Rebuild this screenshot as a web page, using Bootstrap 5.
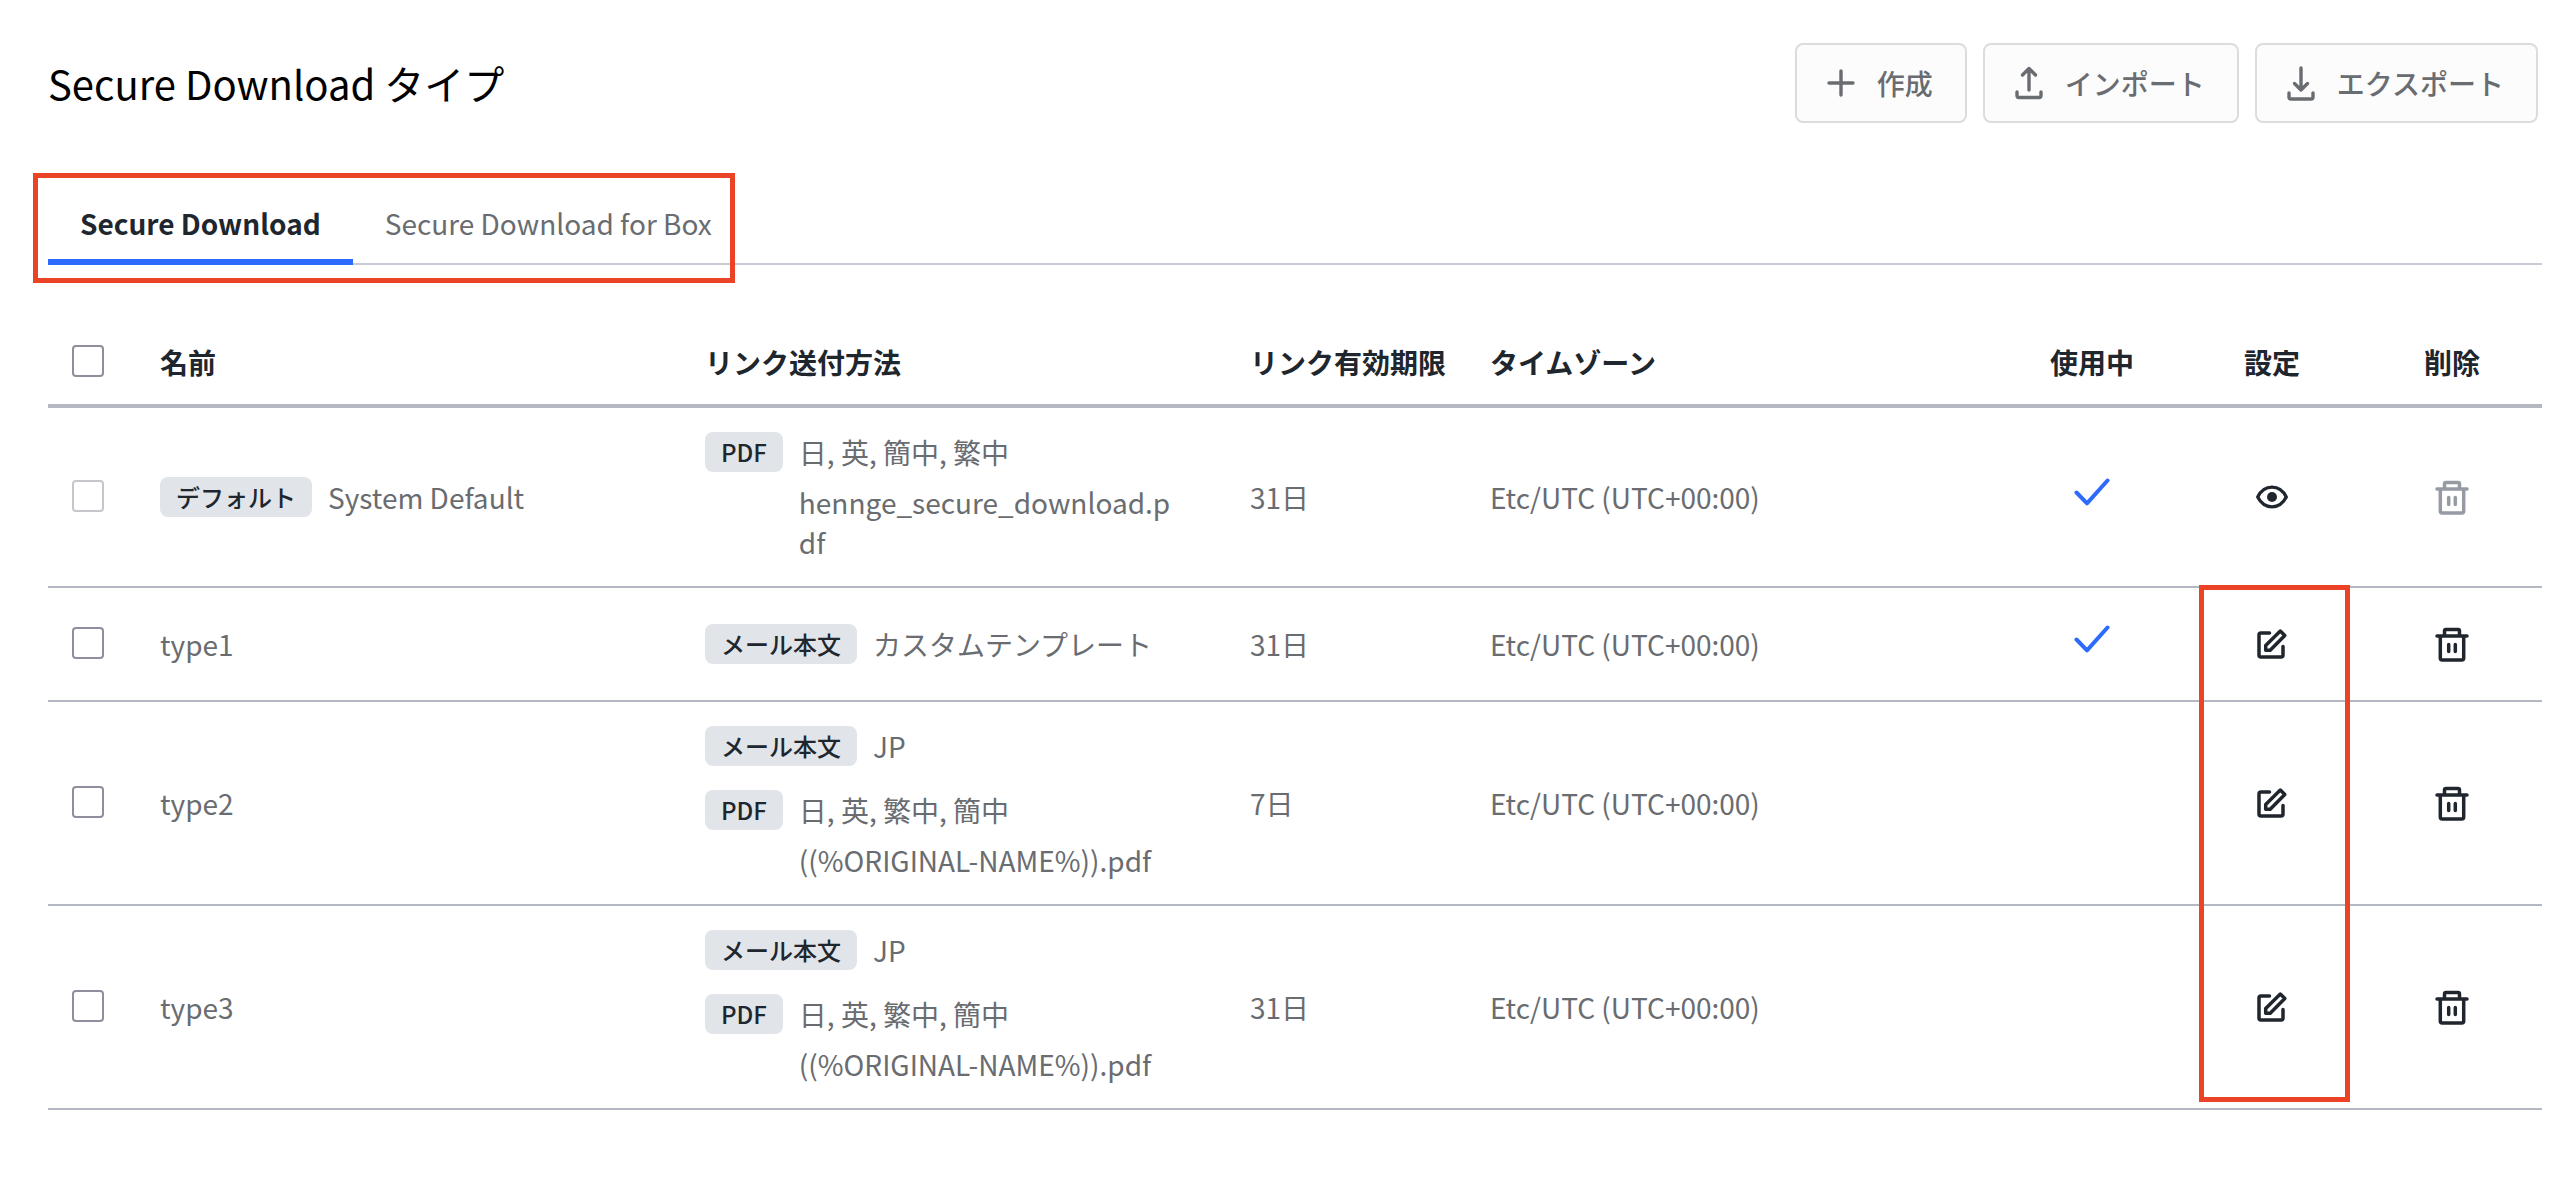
<!DOCTYPE html>
<html lang="ja">
<head>
<meta charset="utf-8">
<meta name="viewport" content="width=device-width, initial-scale=1">
<title>Secure Download タイプ</title>
<link href="https://cdn.jsdelivr.net/npm/bootstrap@5.3.0/dist/css/bootstrap.min.css" rel="stylesheet">
<style>
  body { font-family: "Noto Sans CJK JP", "Noto Sans", sans-serif; font-size: 28px; line-height: 40px; color: #696c70; background: #fff; }
  .page { padding: 43px 34px 48px 48px; }
  .page-title { font-size: 40px; line-height: 60px; font-weight: 400; color: #000; }
  .page-actions { gap: 16px; margin-right: 4px; }
  .action-btn { display: flex; align-items: center; gap: 24px; height: 80px; padding: 0 32px; border: 2px solid #dcdcdc; border-radius: 8px; background: #fcfcfc; color: #696c70; font-size: 28px; line-height: 40px; font-weight: 500; }
  .action-btn:hover { background: #f3f3f3; color: #555; border-color: #dcdcdc; }
  svg { display: block; fill: none; stroke: currentColor; stroke-linecap: round; stroke-linejoin: round; overflow: visible; }
  .type-tabs { position: relative; margin-top: 64px; box-shadow: inset 0 -2px #c8cdd5; }
  .type-tabs .nav-link { padding: 16px 32px; border-bottom: 6px solid transparent; color: #696c70; }
  .type-tabs .nav-link.active { font-weight: 700; color: #20262d; border-bottom-color: #2d6bff; }
  .callout-frame { position: absolute; border: 5px solid #ec4226; pointer-events: none; }
  .frame-tabs { left: -15px; top: -14px; bottom: -18px; width: 702px; }
  .frame-settings { right: 192px; top: 265px; bottom: 8px; width: 151px; }
  .table-area { position: relative; margin-top: 55px; }
  .type-table { table-layout: fixed; border-collapse: separate; border-spacing: 0; margin: 0; color: inherit; }
  .type-table > :not(caption) > * > * { padding: 24px 16px; border-bottom: 2px solid #b4b8c3; color: inherit; background: none; vertical-align: middle; }
  .type-table > thead > tr > th { padding: 22px 16px; border-bottom-width: 4px; color: #20262d; font-weight: 700; }
  .type-table > :not(caption) > * > .icon-cell { padding: 0; text-align: center; }
  .type-table > :not(caption) > * > .check-cell { padding: 0 0 0 24px; }
  .type-table > tbody > tr { height: 114px; }
  .col-check { width: 96px; }
  .col-wide { width: 21.85%; }
  .col-limit { width: 240px; }
  .col-icon { width: 180px; }
  .row-check.form-check-input { display: block; float: none; width: 32px; height: 32px; margin: 0 0 2px; border: 2px solid #8f8e9c; border-radius: 4px; }
  .tag { flex: none; height: 40px; padding: 0 16px; border-radius: 8px; background: #e1e4e9; color: #20262d; font-size: 24px; line-height: 40px; font-weight: 500; }
  .tag-row { display: flex; gap: 16px; }
  .tag-row + .tag-row { margin-top: 24px; }
  .file-name { margin-top: 10px; word-break: break-all; }
  .method-cell .tag-row { margin-right: 32px; }
  .icon-btn { padding: 16px; border: 0; color: #20262d; line-height: 1; }
  .icon-btn:disabled { border: 0; color: #969ba3; opacity: 1; }
  .in-use { display: inline-block; margin-bottom: 14px; color: #2d6bff; vertical-align: middle; }
</style>
</head>
<body>
<svg width="0" height="0" class="position-absolute" aria-hidden="true">
  <symbol id="i-eye" viewBox="0 0 32 32"><path d="M1.7 16C5 9.500 10 6.200 16 6.200S27 9.500 30.300 16C27 22.500 22 25.800 16 25.800S5 22.500 1.700 16Z" stroke-width="3.300"/><circle cx="16" cy="16" r="5" fill="currentColor" stroke="none"/></symbol>
  <symbol id="i-edit" viewBox="0 0 32 32"><path d="M13.500 5H5Q3 5 3 7V27Q3 29 5 29H25Q27 29 27 27V18.500M9.700 22.300V17.500L24.300 3L28.800 7.500L14.200 22.300Z" stroke-width="3.500"/></symbol>
  <symbol id="i-trash" viewBox="0 0 36 36"><path d="M3 10H33M10.500 10V5Q10.500 3.500 12 3.500H24Q25.500 3.500 25.500 5V10M6.300 11V32Q6.300 34 8.300 34H27.700Q29.700 34 29.700 32V11" stroke-width="3.500"/><path d="M14.700 18.500V25.500M21.300 18.500V25.500" stroke-width="3.500"/></symbol>
  <symbol id="i-check" viewBox="0 0 36 28"><path d="M2.500 14.500L13 25.300L33.500 2.500" stroke-width="4"/></symbol>
</svg>

<main class="container-fluid page">
  <header class="d-flex justify-content-between align-items-center">
    <h1 class="page-title mb-0">Secure Download タイプ</h1>
    <div class="page-actions d-flex">
      <button type="button" class="btn action-btn"><svg width="24" height="24" viewBox="0 0 24 24" stroke-width="3.400" stroke-linecap="butt" aria-hidden="true"><path d="M12 0V24M0 12H24"/></svg>作成</button>
      <button type="button" class="btn action-btn"><svg width="24" height="32" viewBox="0 0 24 32" stroke-width="3.400" aria-hidden="true"><path d="M12 23V1.500M5.500 8L12 1.500L18.500 8M0 25V28.500Q0 30.500 2 30.500H22Q24 30.500 24 28.500V25"/></svg>インポート</button>
      <button type="button" class="btn action-btn"><svg width="24" height="32" viewBox="0 0 24 32" stroke-width="3.400" aria-hidden="true"><path d="M12 1V23M5.500 16.500L12 23L18.500 16.500M0 26V30Q0 32 2 32H22Q24 32 24 30V26"/></svg>エクスポート</button>
    </div>
  </header>

  <nav class="nav type-tabs">
    <a class="nav-link active" aria-current="page" href="#">Secure Download</a>
    <a class="nav-link" href="#">Secure Download for Box</a>
    <span class="callout-frame frame-tabs"></span>
  </nav>

  <div class="table-area">
    <table class="table type-table">
      <colgroup><col class="col-check"><col class="col-wide"><col class="col-wide"><col class="col-limit"><col><col class="col-icon"><col class="col-icon"><col class="col-icon"></colgroup>
      <thead>
        <tr>
          <th class="check-cell"><input class="form-check-input row-check" type="checkbox" aria-label="すべて選択"></th>
          <th>名前</th><th>リンク送付方法</th><th class="text-nowrap">リンク有効期限</th><th>タイムゾーン</th>
          <th class="icon-cell">使用中</th><th class="icon-cell">設定</th><th class="icon-cell">削除</th>
        </tr>
      </thead>
      <tbody>
        <tr>
          <td class="check-cell"><input class="form-check-input row-check" type="checkbox" aria-label="System Default" disabled></td>
          <td><div class="tag-row"><span class="tag">デフォルト</span><span>System Default</span></div></td>
          <td class="method-cell"><div class="tag-row"><span class="tag">PDF</span><div><div>日, 英, 簡中, 繁中</div><div class="file-name">hennge_secure_download.pdf</div></div></div></td>
          <td>31日</td><td>Etc/UTC (UTC+00:00)</td>
          <td class="icon-cell"><svg class="in-use" width="36" height="28" role="img" aria-label="使用中"><use href="#i-check"/></svg></td>
          <td class="icon-cell"><button type="button" class="btn icon-btn" aria-label="表示"><svg width="32" height="32"><use href="#i-eye"/></svg></button></td>
          <td class="icon-cell"><button type="button" class="btn icon-btn" aria-label="削除" disabled><svg width="36" height="36"><use href="#i-trash"/></svg></button></td>
        </tr>
        <tr>
          <td class="check-cell"><input class="form-check-input row-check" type="checkbox" aria-label="type1"></td>
          <td>type1</td>
          <td class="method-cell"><div class="tag-row"><span class="tag">メール本文</span><span>カスタムテンプレート</span></div></td>
          <td>31日</td><td>Etc/UTC (UTC+00:00)</td>
          <td class="icon-cell"><svg class="in-use" width="36" height="28" role="img" aria-label="使用中"><use href="#i-check"/></svg></td>
          <td class="icon-cell"><button type="button" class="btn icon-btn" aria-label="編集"><svg width="32" height="32"><use href="#i-edit"/></svg></button></td>
          <td class="icon-cell"><button type="button" class="btn icon-btn" aria-label="削除"><svg width="36" height="36"><use href="#i-trash"/></svg></button></td>
        </tr>
        <tr>
          <td class="check-cell"><input class="form-check-input row-check" type="checkbox" aria-label="type2"></td>
          <td>type2</td>
          <td class="method-cell"><div class="tag-row"><span class="tag">メール本文</span><span>JP</span></div><div class="tag-row"><span class="tag">PDF</span><div><div>日, 英, 繁中, 簡中</div><div class="file-name">((%ORIGINAL-NAME%)).pdf</div></div></div></td>
          <td>7日</td><td>Etc/UTC (UTC+00:00)</td>
          <td class="icon-cell"></td>
          <td class="icon-cell"><button type="button" class="btn icon-btn" aria-label="編集"><svg width="32" height="32"><use href="#i-edit"/></svg></button></td>
          <td class="icon-cell"><button type="button" class="btn icon-btn" aria-label="削除"><svg width="36" height="36"><use href="#i-trash"/></svg></button></td>
        </tr>
        <tr>
          <td class="check-cell"><input class="form-check-input row-check" type="checkbox" aria-label="type3"></td>
          <td>type3</td>
          <td class="method-cell"><div class="tag-row"><span class="tag">メール本文</span><span>JP</span></div><div class="tag-row"><span class="tag">PDF</span><div><div>日, 英, 繁中, 簡中</div><div class="file-name">((%ORIGINAL-NAME%)).pdf</div></div></div></td>
          <td>31日</td><td>Etc/UTC (UTC+00:00)</td>
          <td class="icon-cell"></td>
          <td class="icon-cell"><button type="button" class="btn icon-btn" aria-label="編集"><svg width="32" height="32"><use href="#i-edit"/></svg></button></td>
          <td class="icon-cell"><button type="button" class="btn icon-btn" aria-label="削除"><svg width="36" height="36"><use href="#i-trash"/></svg></button></td>
        </tr>
      </tbody>
    </table>
    <span class="callout-frame frame-settings"></span>
  </div>
</main>
<script src="https://cdn.jsdelivr.net/npm/bootstrap@5.3.0/dist/js/bootstrap.bundle.min.js"></script>
</body>
</html>
